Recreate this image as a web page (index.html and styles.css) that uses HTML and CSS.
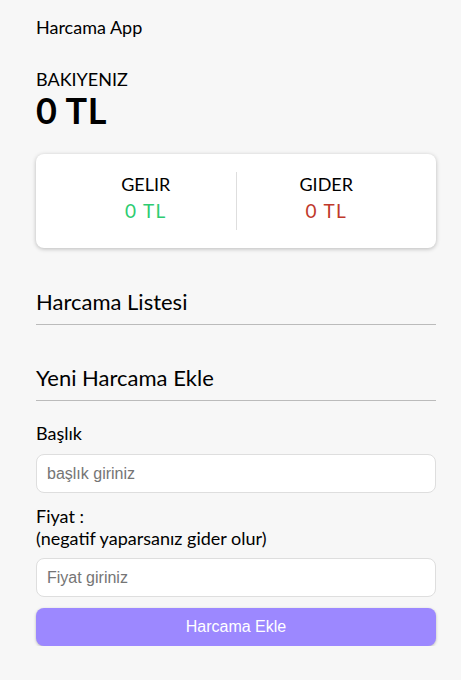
FILE: index.html
```html
<!DOCTYPE html>
<html lang="tr">
<head>
<meta charset="utf-8">
<link rel="stylesheet" href="styles.css">
</head>
<body>
<div class="container">
  <h4 class="app-title">Harcama App</h4>
  <div class="balance">
    <h4 class="balance-label">BAKIYENIZ</h4>
    <h1 class="balance-value">0 TL</h1>
  </div>
  <div class="card">
    <div class="card-col">
      <h4 class="card-label">GELIR</h4>
      <p class="money plus">0 TL</p>
    </div>
    <div class="card-col">
      <h4 class="card-label">GIDER</h4>
      <p class="money minus">0 TL</p>
    </div>
  </div>
  <h3 class="section-title">Harcama Listesi</h3>
  <ul class="list"></ul>
  <h3 class="section-title">Yeni Harcama Ekle</h3>
  <form class="form">
    <div class="form-control">
      <label class="label" for="text">Başlık</label>
      <input class="input" type="text" id="text" placeholder="başlık giriniz">
    </div>
    <div class="form-control">
      <label class="label tight" for="amount">Fiyat :<br>(negatif yaparsanız gider olur)</label>
      <input class="input" type="number" id="amount" placeholder="Fiyat giriniz">
    </div>
    <button class="btn" type="button">Harcama Ekle</button>
  </form>
</div>
</body>
</html>
```

FILE: styles.css
```css
* { box-sizing: border-box; }
html, body { margin: 0; padding: 0; }
body {
  background: #f7f7f7;
  font-family: Lato, "Noto Sans", sans-serif;
  color: #000;
}
.container {
  width: 400px;
  margin-left: 36px;
  padding-top: 16px;
}
.app-title {
  margin: 0;
  font-size: 18px;
  font-weight: 400;
  line-height: 22px;
}
.balance { margin-top: 30px; }
.balance-label {
  margin: 0;
  font-size: 18px;
  font-weight: 400;
  line-height: 22px;
}
.balance-value {
  margin: 0;
  font-size: 36px;
  font-weight: 700;
  line-height: 40px;
  letter-spacing: 0.5px;
}
.card {
  margin-top: 24px;
  background: #fff;
  border-radius: 8px;
  box-shadow: 0 1px 4px rgba(0,0,0,0.25);
  display: flex;
  padding: 18px 20px;
}
.card-col {
  flex: 1;
  text-align: center;
}
.card-col:first-child { border-right: 1px solid #dedede; }
.card-label {
  margin: 0;
  font-size: 18px;
  font-weight: 400;
  line-height: 22px;
  padding-top: 1px;
}
.money {
  margin: 5px 0 0;
  font-size: 19px;
  line-height: 22px;
  letter-spacing: 1.3px;
  padding-bottom: 8px;
}
.plus { color: #2ecc71; }
.minus { color: #c0392b; }
.section-title {
  margin: 40px 0 0;
  font-size: 22px;
  font-weight: 400;
  line-height: 28px;
  padding-bottom: 8px;
  border-bottom: 1px solid #bbb;
}
.list { margin: 0; padding: 0; list-style: none; }
.section-title + .list + .section-title { margin-top: 39px; }
.form { margin-top: 21px; }
.form-control { display: flex; flex-direction: column; }
.label {
  font-size: 18px;
  line-height: 22px;
  margin-bottom: 10px;
}
.label.tight { margin-bottom: 9px; }
.input {
  height: 39px;
  border: 1px solid #dedede;
  border-radius: 8px;
  padding: 0 10px;
  font-family: "Liberation Sans", Arial, sans-serif;
  font-size: 16px;
  background: #fff;
  margin-bottom: 12px;
}
.input::placeholder { color: #757575; }
.btn {
  width: 100%;
  height: 38px;
  border: none;
  border-radius: 8px;
  background: #9c88ff;
  color: #fff;
  font-family: "Liberation Sans", Arial, sans-serif;
  font-size: 16px;
  box-shadow: 0 1px 3px rgba(0,0,0,0.25);
  margin-top: -1px;
}
```
